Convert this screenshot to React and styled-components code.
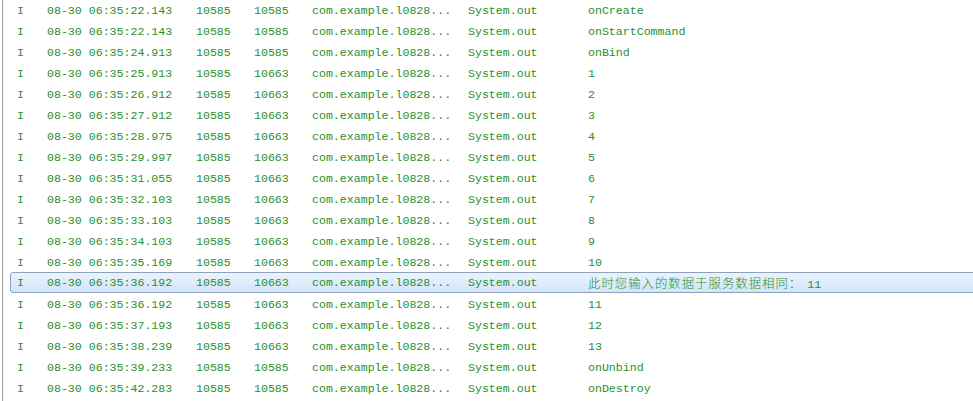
import React from "react";
import styled, { createGlobalStyle } from "styled-components";

const GlobalStyle = createGlobalStyle`
  html, body {
    margin: 0;
    padding: 0;
    background: #ffffff;
    overflow: hidden;
  }
`;

const LogPanel = styled.div`
  width: 973px;
  height: 401px;
  box-sizing: border-box;
  margin-left: 2px;
  border-left: 1px solid #a0a0a0;
  font-family: "Liberation Mono", "Noto Sans CJK SC", monospace;
  font-size: 11.6px;
  color: #2a8f2a;
  overflow: hidden;
`;

const Row = styled.div`
  display: grid;
  grid-template-columns: 30px 149px 58px 58px 156px 120px 1fr;
  align-items: center;
  height: 21px;
  box-sizing: border-box;
  padding-left: 14px;
  white-space: nowrap;

  ${(p) =>
    p.$selected &&
    `
    margin-top: -1px;
    margin-bottom: 1px;
    margin-left: 7px;
    margin-right: -10px;
    padding-left: 6px;
    border: 1px solid #8ea2bd;
    border-radius: 3px;
    background: linear-gradient(#eaf3fd, #d3e5fa);
  `}
`;

const Cell = styled.span`
  overflow: hidden;
`;

const Cjk = styled.span`
  font-family: "Noto Sans CJK SC", sans-serif;
  font-size: 12.4px;
  letter-spacing: 1px;
  font-weight: 300;
  margin-right: 5px;
`;

const logs = [
  ["08-30 06:35:22.143", "10585", "10585", "onCreate"],
  ["08-30 06:35:22.143", "10585", "10585", "onStartCommand"],
  ["08-30 06:35:24.913", "10585", "10585", "onBind"],
  ["08-30 06:35:25.913", "10585", "10663", "1"],
  ["08-30 06:35:26.912", "10585", "10663", "2"],
  ["08-30 06:35:27.912", "10585", "10663", "3"],
  ["08-30 06:35:28.975", "10585", "10663", "4"],
  ["08-30 06:35:29.997", "10585", "10663", "5"],
  ["08-30 06:35:31.055", "10585", "10663", "6"],
  ["08-30 06:35:32.103", "10585", "10663", "7"],
  ["08-30 06:35:33.103", "10585", "10663", "8"],
  ["08-30 06:35:34.103", "10585", "10663", "9"],
  ["08-30 06:35:35.169", "10585", "10663", "10"],
  ["08-30 06:35:36.192", "10585", "10663", "11", "此时您输入的数据于服务数据相同："],
  ["08-30 06:35:36.192", "10585", "10663", "11"],
  ["08-30 06:35:37.193", "10585", "10663", "12"],
  ["08-30 06:35:38.239", "10585", "10663", "13"],
  ["08-30 06:35:39.233", "10585", "10585", "onUnbind"],
  ["08-30 06:35:42.283", "10585", "10585", "onDestroy"],
];

export default function App() {
  return (
    <>
      <GlobalStyle />
      <LogPanel>
        {logs.map(([time, pid, tid, text, prefix], i) => (
          <Row key={i} $selected={!!prefix}>
            <Cell>I</Cell>
            <Cell>{time}</Cell>
            <Cell>{pid}</Cell>
            <Cell>{tid}</Cell>
            <Cell>com.example.l0828...</Cell>
            <Cell>System.out</Cell>
            <Cell>
              {prefix && <Cjk>{prefix}</Cjk>}
              {text}
            </Cell>
          </Row>
        ))}
      </LogPanel>
    </>
  );
}
